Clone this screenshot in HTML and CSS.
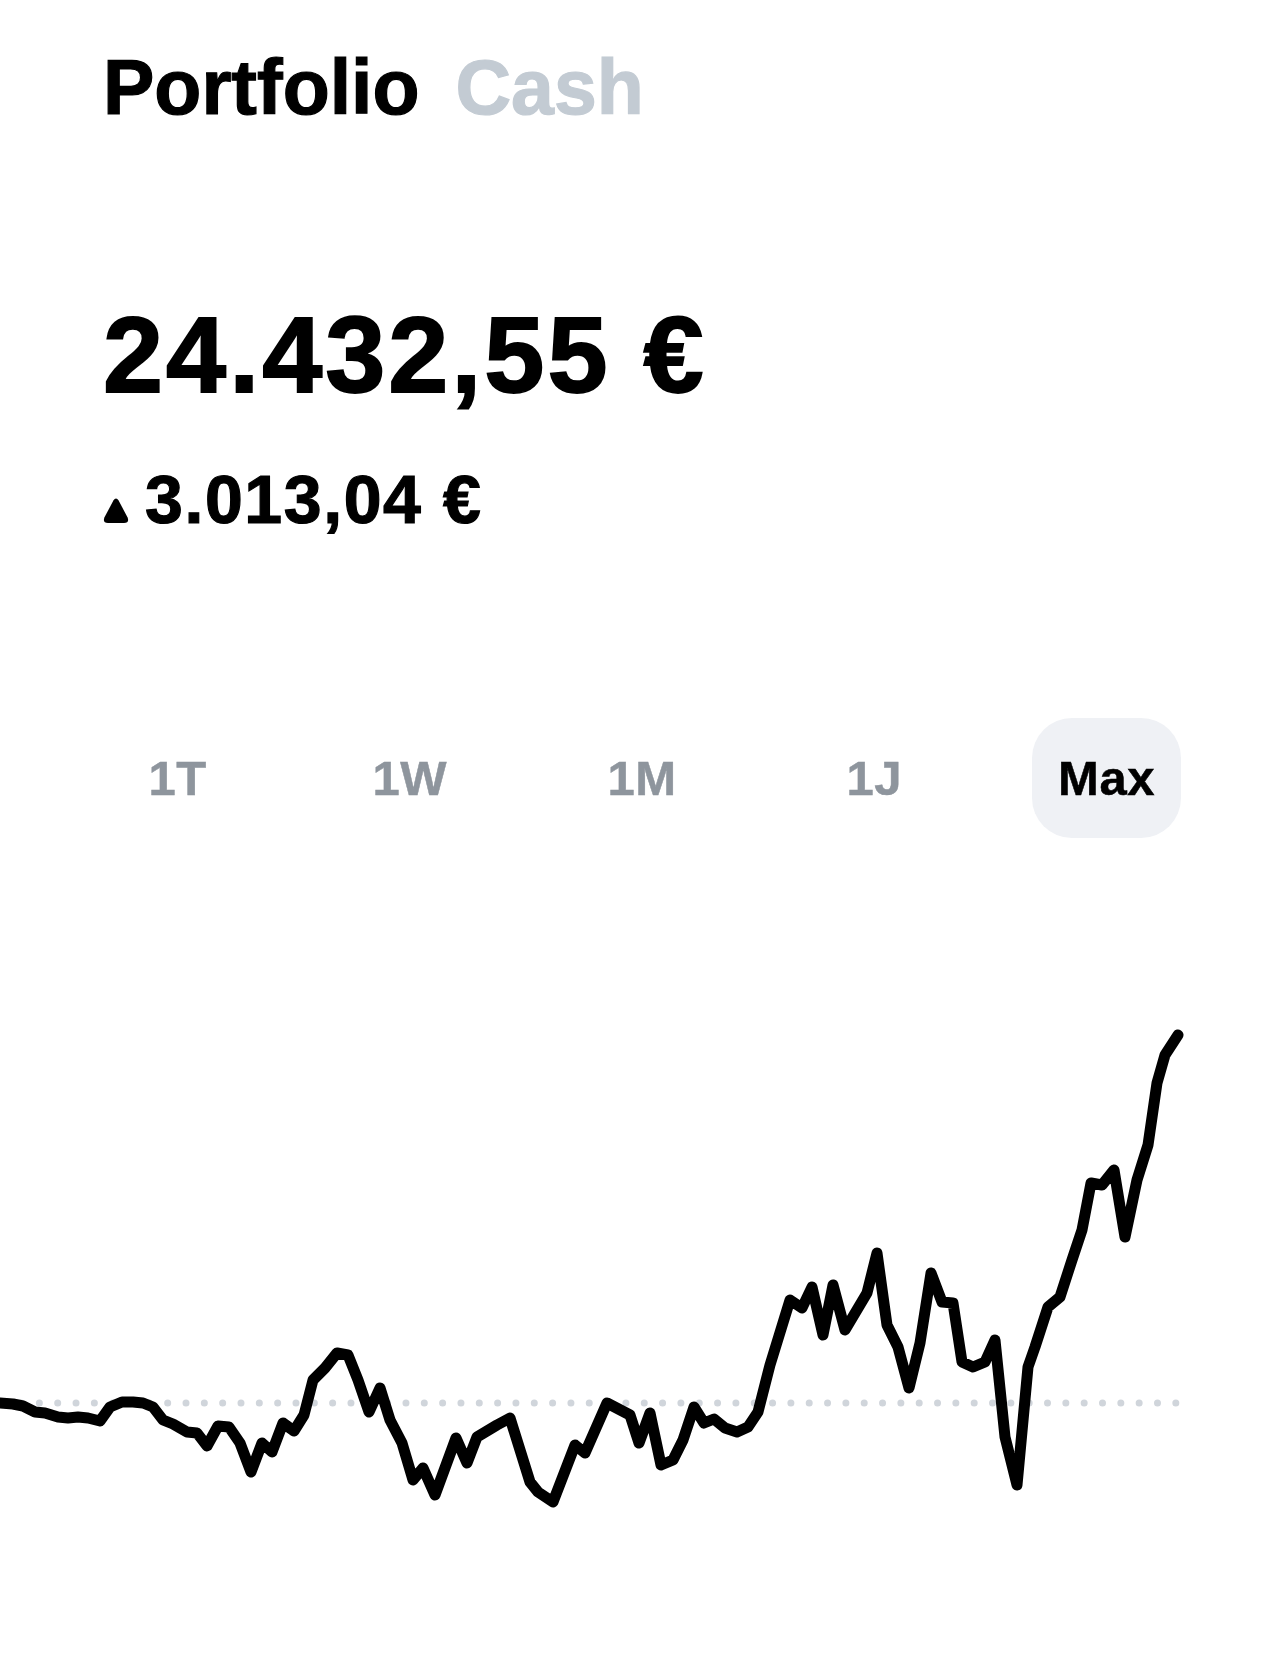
FILE: index.html
```html
<html>
  <head>
    <link rel="stylesheet" href="styles.css">
  </head>
  <body>
    <div class="screen">
      <div class="switch">
        <span class="switch-item active">Portfolio</span>
        <span class="switch-item">Cash</span>
      </div>
      <div class="balance">24.432,55 €</div>
      <div class="change">
        <svg class="arrow" width="26" height="25" viewBox="0 0 26 25">
          <path d="M10.4 2.6 Q13 -1.4 15.6 2.6 L24.6 19.4 Q26.6 25 21 25 L5 25 Q-0.6 25 1.4 19.4 Z" fill="#000"/>
        </svg>
        <span>3.013,04 €</span>
      </div>
      <div class="ranges">
        <button class="range">1T</button>
        <button class="range">1W</button>
        <button class="range">1M</button>
        <button class="range">1J</button>
        <button class="range selected">Max</button>
      </div>
    </div>
    <svg class="chart" width="1284" height="520" viewBox="0 1000 1284 520">
      <line class="baseline" x1="2.7" y1="1403" x2="1177" y2="1403"/>
      <polyline class="trend" points="0,1403 13,1404 23,1406 35,1412 45,1413 58,1417 68,1418 78,1417 88,1418 100,1421 110,1407 122,1402 133,1402 143,1403 153,1407 163,1420 173,1424 187,1432 197,1433 207,1446 218,1426 229,1427 240,1443 251,1472 262,1443 272,1452 283,1423 294,1431 304,1415 313,1380 325,1368 337,1353 348,1355 358,1380 369,1412 380,1388 390,1420 402,1443 413,1480 423,1468 435,1495 456,1438 467,1463 477,1437 497,1425 510,1418 530,1482 538,1492 553,1502 575,1445 585,1453 607,1403 630,1415 639,1443 650,1413 661,1465 673,1460 683,1440 694,1407 704,1423 714,1419 725,1428 737,1432 748,1427 758,1412 770,1365 790,1300 802,1308 812,1287 823,1335 833,1285 845,1330 867,1293 877,1253 887,1325 898,1347 909,1388 920,1343 931,1273 942,1302 953,1303 962,1362 973,1367 985,1362 995,1340 1005,1437 1017,1485 1028,1367 1035,1347 1048,1307 1060,1297 1072,1260 1082,1230 1091,1183 1102,1185 1114,1170 1125,1237 1137,1180 1148,1145 1157,1083 1165,1055 1178,1035"/>
    </svg>
  </body>
</html>
```

FILE: styles.css
```css
body {
  margin: 0;
  background: white;
  font-family: "Liberation Sans", Arial, sans-serif;
  color: black;
}
.screen {
  padding: 49px 103px 0 103px;
}
.switch {
  display: flex;
  gap: 36px;
  font-size: 77px;
  line-height: 76px;
  font-weight: bold;
  -webkit-text-stroke: 1.2px currentColor;
}
.switch-item {
  color: #c3cbd3;
}
.switch-item.active {
  color: black;
}
.balance {
  margin-top: 176px;
  font-size: 108px;
  line-height: 108px;
  font-weight: bold;
  letter-spacing: 3px;
  -webkit-text-stroke: 1.8px black;
}
.change {
  margin-top: 56px;
  display: flex;
  align-items: baseline;
  gap: 16px;
  font-size: 68px;
  line-height: 68px;
  font-weight: bold;
  letter-spacing: 1.6px;
  -webkit-text-stroke: 1.2px black;
}
.arrow {
  display: block;
}
.ranges {
  margin-top: 185px;
  display: flex;
  justify-content: space-between;
}
.range {
  width: 149px;
  height: 120px;
  padding: 0;
  border: none;
  border-radius: 40px;
  background: transparent;
  font-family: "Liberation Sans", Arial, sans-serif;
  font-size: 49px;
  line-height: 49px;
  font-weight: bold;
  letter-spacing: 0.5px;
  color: #8e959d;
  -webkit-text-stroke: 0.5px currentColor;
}
.range.selected {
  background: #eff1f5;
  color: black;
}
.chart {
  display: block;
  margin-top: 162px;
}
.baseline {
  stroke: #d0d5db;
  stroke-width: 7;
  stroke-linecap: round;
  stroke-dasharray: 0 18.33;
}
.trend {
  fill: none;
  stroke: black;
  stroke-width: 11;
  stroke-linejoin: round;
  stroke-linecap: round;
}
```
